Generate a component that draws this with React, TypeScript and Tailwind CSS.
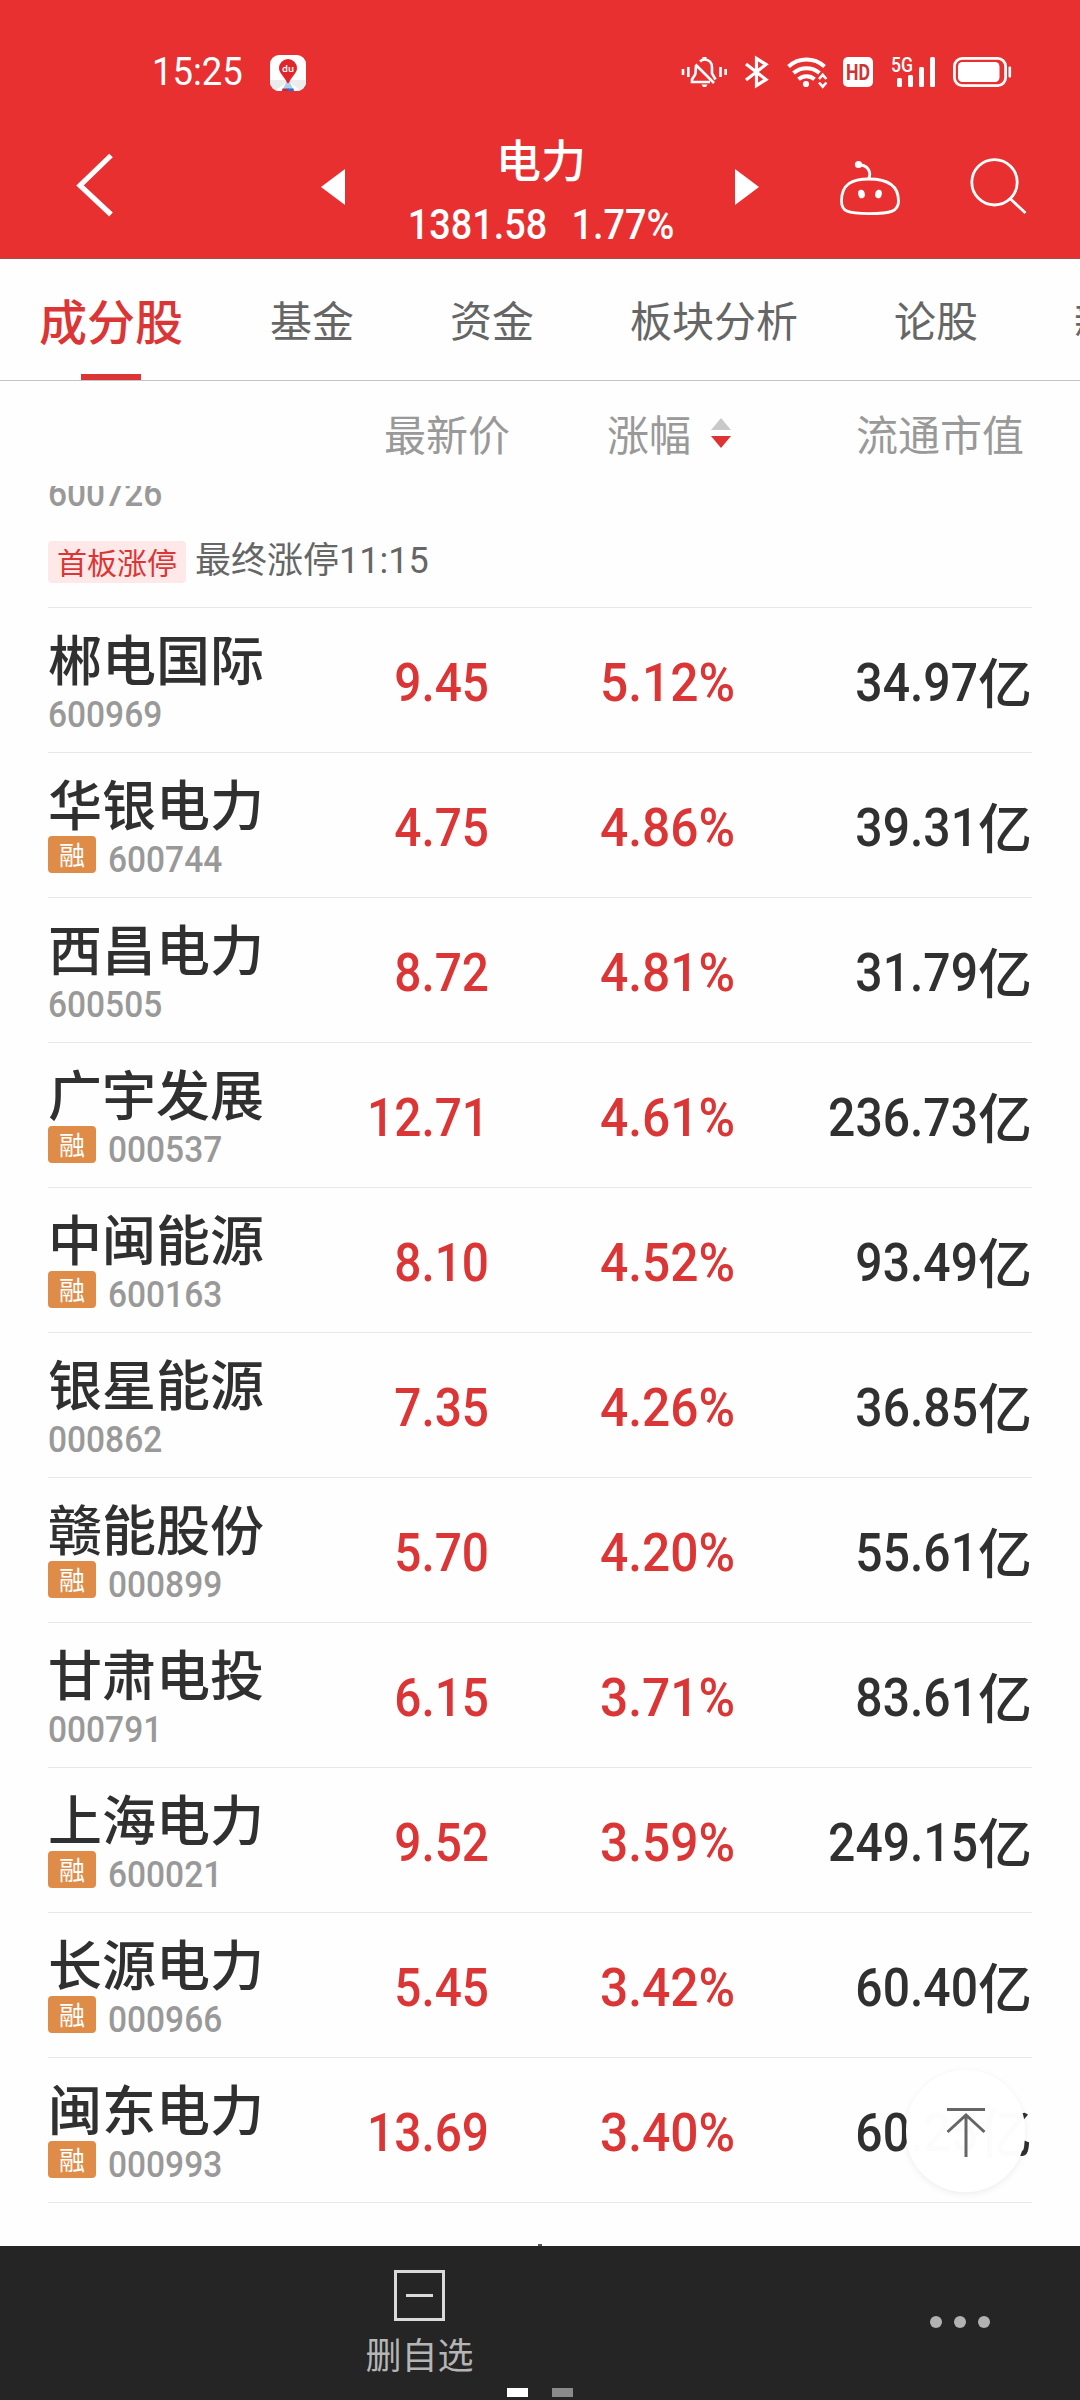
import React from 'react';

const CJK = "font-['Noto_Sans_CJK_SC',sans-serif]";
const NUM = "font-['Roboto','Noto_Sans_CJK_SC',sans-serif]";

type Stock = { name: string; code: string; margin?: boolean; price: string; change: string; cap: string };

const stocks: Stock[] = [
  { name: '郴电国际', code: '600969', price: '9.45', change: '5.12%', cap: '34.97' },
  { name: '华银电力', code: '600744', margin: true, price: '4.75', change: '4.86%', cap: '39.31' },
  { name: '西昌电力', code: '600505', price: '8.72', change: '4.81%', cap: '31.79' },
  { name: '广宇发展', code: '000537', margin: true, price: '12.71', change: '4.61%', cap: '236.73' },
  { name: '中闽能源', code: '600163', margin: true, price: '8.10', change: '4.52%', cap: '93.49' },
  { name: '银星能源', code: '000862', price: '7.35', change: '4.26%', cap: '36.85' },
  { name: '赣能股份', code: '000899', margin: true, price: '5.70', change: '4.20%', cap: '55.61' },
  { name: '甘肃电投', code: '000791', price: '6.15', change: '3.71%', cap: '83.61' },
  { name: '上海电力', code: '600021', margin: true, price: '9.52', change: '3.59%', cap: '249.15' },
  { name: '长源电力', code: '000966', margin: true, price: '5.45', change: '3.42%', cap: '60.40' },
  { name: '闽东电力', code: '000993', margin: true, price: '13.69', change: '3.40%', cap: '60.25' },
];

function StatusIcons() {
  return (
    <svg width="340" height="36" viewBox="680 54 340 36" fill="none" stroke="#fff" className="block">
      {/* muted bell with vibration marks */}
      <g strokeWidth="2.6">
        <path d="M683 69v6M688.300 67v10M720.500 67v10M725.700 69v6" />
        <path d="M700 61.500c1.500-1.400 3-2 4.500-2 4.500 0 7.500 3.200 7.500 8v6l3.500 6M696 66c-.4 2.500-.2 6-.8 8.500l-3.200 5v2.500h18M695.500 64.500L714 83" />
      </g>
      <path d="M702.500 57h4v3h-4zM701.500 84.500h6l-1.500 2.500h-3z" fill="#fff" stroke="none" />
      {/* bluetooth */}
      <path d="M746 64l20 15.500-9.500 6V58.500l9.500 6-20 15.500" strokeWidth="3.200" />
      {/* wifi */}
      <g strokeWidth="4">
        <path d="M788.500 66.500c10.500-9.300 25.500-9.300 36 0" />
        <path d="M793.500 73c7.500-6.500 18.500-6.500 26 0" />
        <path d="M798.500 79.300c4.800-4 11.200-4 16 0" />
      </g>
      <circle cx="806" cy="84" r="3.100" fill="#fff" stroke="none" />
      <path d="M819 79l3.700-4.200 3.700 4.200M819 82.500l3.700 4.200 3.700-4.200" strokeWidth="2.600" />
      {/* HD */}
      <rect x="843" y="57" width="30" height="30" rx="5" fill="#fff" stroke="none" />
      <text x="858" y="79.800" textAnchor="middle" textLength="24" lengthAdjust="spacingAndGlyphs" fontFamily="Roboto" fontWeight="700" fontSize="22" fill="#cf3434" stroke="none">HD</text>
      {/* signal */}
      <text x="891" y="72" textLength="22" lengthAdjust="spacingAndGlyphs" fontFamily="Roboto" fontSize="20.500" fontWeight="500" fill="#fff" stroke="none">5G</text>
      <g fill="#fff" stroke="none">
        <rect x="897" y="78" width="5" height="9" rx="1.500" />
        <rect x="908" y="75" width="5" height="12" rx="1.500" />
        <rect x="919" y="67" width="5" height="20" rx="1.500" />
        <rect x="930" y="57" width="5" height="30" rx="1.500" />
      </g>
      {/* battery */}
      <rect x="954.400" y="58.400" width="51.200" height="27.200" rx="8" strokeWidth="2.800" />
      <rect x="958" y="62" width="41.500" height="20" rx="4.500" fill="#fff" stroke="none" />
      <rect x="1008.500" y="66.500" width="2.600" height="11" rx="1" fill="#fff" stroke="none" />
    </svg>
  );
}

function MapAppIcon() {
  return (
    <svg width="36" height="36" viewBox="0 0 36 36" className="ml-[27px] block">
      <rect width="36" height="36" rx="9" fill="#fff" />
      <path d="M0 25h36v2a9 9 0 0 1-9 9H9a9 9 0 0 1-9-9z" fill="#ececec" />
      <path d="M17 27L6 35l5 1zM19 27l11 8-5 1z" fill="#fff" />
      <path d="M16 28h4l4 8H12z" fill="#a9cff0" />
      <path d="M12.500 33.500H19V36h-7z" fill="#b92f4a" />
      <path d="M18 33.500h5.500L24 36h-6z" fill="#2d6fd0" />
      <path d="M18 4a9 9 0 0 0-9 9c0 5.500 5.500 8 8 15h2c2.500-7 8-9.500 8-15a9 9 0 0 0-9-9z" fill="#e3242b" />
      <text x="18" y="16.500" textAnchor="middle" fontFamily="Noto Sans" fontSize="9.500" fontWeight="600" fill="#fff">du</text>
    </svg>
  );
}

function Header() {
  return (
    <header className="flex h-[259px] flex-col border-b border-[#a05252] bg-[#e83031] text-white">
      <div className="flex h-[145px] justify-between pl-[152px] pr-[60px]">
        <div className="flex pt-[55px]">
          <span className={`${NUM} mt-[-2px] w-[91px] origin-left scale-x-[0.96] text-[38px] leading-[38px] whitespace-nowrap`}>15:25</span>
          <MapAppIcon />
        </div>
        <div className="pt-[54px]">
          <StatusIcons />
        </div>
      </div>
      <div className="flex h-[113px]">
        <svg width="40" height="66" viewBox="0 0 40 66" fill="none" className="ml-[75px] mt-[6px]">
          <path d="M36 4.500L5 34.500l31 29" stroke="#fff" strokeWidth="5.200" />
        </svg>
        <svg width="24" height="36" viewBox="0 0 24 36" className="ml-[206px] mt-[24px]">
          <path d="M24 0v36L0 18z" fill="#fff" />
        </svg>
        <div className="ml-[45px] flex w-[302px] flex-col items-center">
          <div className={`${CJK} mt-[-12px] text-[45px] leading-[52px] font-medium`}>电力</div>
          <div className={`${NUM} mt-[19px] flex scale-x-[0.9] gap-[27px] text-[42px] leading-[42px] font-medium whitespace-nowrap`}>
            <span>1381.58</span>
            <span>1.77%</span>
          </div>
        </div>
        <svg width="24" height="36" viewBox="0 0 24 36" className="ml-[43px] mt-[24px]">
          <path d="M0 0v36l24-18z" fill="#fff" />
        </svg>
        <svg width="64" height="60" viewBox="838 158 64 60" fill="none" stroke="#fff" strokeWidth="2.800" className="ml-[79px] mt-[13px]">
          <path d="M869 179c-17 0-27.500 5-27.500 22 0 10 5 12.700 27.500 12.700s29.500-2.700 29.500-12.700c0-17-12.500-22-29.500-22z" />
          <path d="M868.500 179c3.500-7-1-14-9-14" />
          <circle cx="858.500" cy="164.500" r="3.600" fill="#fff" stroke="none" />
          <ellipse cx="861.500" cy="194" rx="3.300" ry="4.300" fill="#fff" stroke="none" transform="rotate(-12 861.500 194)" />
          <ellipse cx="878.500" cy="194" rx="3.300" ry="4.300" fill="#fff" stroke="none" transform="rotate(12 878.500 194)" />
        </svg>
        <svg width="60" height="60" viewBox="969 157 60 60" fill="none" stroke="#fff" strokeWidth="2.800" className="ml-[67px] mt-[12px]">
          <circle cx="994.500" cy="182.300" r="22.700" />
          <path d="M1010 198.500l15.500 14.500" />
        </svg>
      </div>
    </header>
  );
}

function Tabs() {
  return (
    <nav className={`${CJK} flex h-[122px] overflow-hidden border-b border-[#c4c4c4] pl-[39px] whitespace-nowrap text-[#666]`}>
      <div className="flex w-[144px] flex-col items-center">
        <span className="mt-[30px] text-[48px] leading-[60px] font-medium text-[#db3535]">成分股</span>
        <span className="mt-[25px] h-[6px] w-[60px] bg-[#db3535]" />
      </div>
      <div className="ml-[87px] flex pt-[30px] text-[42px] leading-[60px]">
        <span className="w-[180px]">基金</span>
        <span className="w-[180px]">资金</span>
        <span className="w-[264px]">板块分析</span>
        <span className="w-[180px]">论股</span>
        <span>新闻</span>
      </div>
    </nav>
  );
}

function ColumnHeads() {
  return (
    <div className={`${CJK} flex h-[105px] pl-[48px] pt-[22px] text-[42px] leading-[60px] whitespace-nowrap text-[#999]`}>
      <span className="w-[462px] text-right">最新价</span>
      <span className="flex w-[223px] justify-end">
        涨幅
        <svg width="20" height="30" viewBox="0 0 20 30" className="ml-[20px] mr-[2px] mt-[15px]">
          <path d="M10 0l10 12H0z" fill="#c9c9c9" />
          <path d="M0 18h20L10 30z" fill="#e03232" />
        </svg>
      </span>
      <span className="w-[291px] text-right">流通市值</span>
    </div>
  );
}

const codeClass = `${NUM} inline-block origin-left scale-x-[0.905] text-[37px] leading-[37px] font-medium text-[#999]`;

function StockRow({ s }: { s: Stock }) {
  return (
    <div className="mx-[48px] flex h-[145px] border-b border-[#e8e8e8] whitespace-nowrap">
      <div className="w-[250px] pt-[23px]">
        <div className={`${CJK} text-[54px] leading-[53px] font-medium text-[#303030]`}>{s.name}</div>
        <div className="flex pt-[7px]">
          {s.margin && (
            <span className={`${CJK} mr-[12px] flex h-[37px] w-[48px] justify-center rounded-[4px] bg-[#e08c49] text-[26px] leading-[36px] text-white`}>融</span>
          )}
          <span className={`${codeClass} mt-[5px]`}>{s.code}</span>
        </div>
      </div>
      <div className={`${NUM} flex pt-[48px] text-right text-[54px] leading-[54px] font-medium`}>
        <span className="inline-block w-[192px] origin-right scale-x-[0.885] text-[#db3535]">{s.price}</span>
        <span className="inline-block w-[246px] origin-right scale-x-[0.92] text-[#db3535]">{s.change}</span>
        <span className="inline-block w-[243px] origin-right scale-x-[0.89] text-[#303030]">{s.cap}</span>
        <span className={`${CJK} mt-[-2px] text-[#303030]`}>亿</span>
      </div>
    </div>
  );
}

function BackToTop() {
  return (
    <button className="absolute left-[906px] top-[2070px] flex h-[122px] w-[119px] items-center justify-center rounded-full bg-white/[0.985] shadow-[0_2px_7px_rgba(0,0,0,0.07)]">
      <svg width="40" height="50" viewBox="0 0 40 50" fill="none" stroke="#666" strokeWidth="3" className="mt-[2px]">
        <path d="M1 2.500h38M20 8v42M1.500 25L20 8l18.500 17" />
      </svg>
    </button>
  );
}

function Footer() {
  return (
    <footer className="flex h-[154px] flex-col bg-[#252525]">
      <div className="flex h-[142px]">
        <div className="ml-[359px] flex w-[121px] flex-col items-center pt-[24px]">
          <div className="flex h-[51px] w-[51px] items-center justify-center border-[3px] border-[#dadada]">
            <span className="h-[3px] w-[27px] bg-[#dadada]" />
          </div>
          <span className={`${CJK} mt-[14px] text-[36px] leading-[36px] whitespace-nowrap text-[#b5b5b5]`}>删自选</span>
        </div>
        <div className="ml-[450px] flex gap-[12px] pt-[70px]">
          <span className="h-[12px] w-[12px] rounded-full bg-[#b2b2b2]" />
          <span className="h-[12px] w-[12px] rounded-full bg-[#b2b2b2]" />
          <span className="h-[12px] w-[12px] rounded-full bg-[#b2b2b2]" />
        </div>
      </div>
      <div className="flex justify-center gap-[24px]">
        <span className="h-[9px] w-[21px] bg-white" />
        <span className="h-[9px] w-[21px] bg-[#8a8a8a]" />
      </div>
    </footer>
  );
}

export default function App() {
  return (
    <div className="relative flex h-[2400px] w-[1080px] flex-col overflow-hidden bg-[#fefefe]">
      <Header />
      <Tabs />
      <ColumnHeads />
      <main className="h-[1760px] overflow-hidden">
        <div className="mx-[48px] h-[122px] border-b border-[#e8e8e8]">
          <div className="h-[55px]">
            <span className={`${codeClass} mt-[-11px]`}>600726</span>
          </div>
          <div className="flex items-start whitespace-nowrap">
            <span className={`${CJK} flex h-[42px] w-[138px] justify-center rounded-[4px] bg-[#fee8e8] text-[30px] leading-[41px] text-[#db3535]`}>首板涨停</span>
            <span className="ml-[9px] font-['Roboto','Noto_Sans_CJK_SC',sans-serif] text-[36px] leading-[40px] text-[#666]">最终涨停11:15</span>
          </div>
        </div>
        {stocks.map((s) => (
          <StockRow key={s.code} s={s} />
        ))}
        <div className="mx-auto mt-[41px] h-[2px] w-[4px] bg-[#555]" />
      </main>
      <BackToTop />
      <Footer />
    </div>
  );
}
